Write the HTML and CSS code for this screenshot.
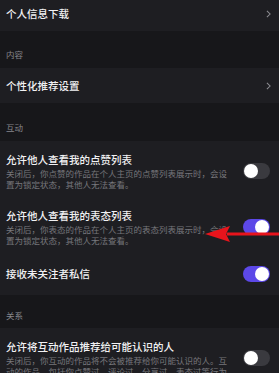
FILE: index.html
```html
<!DOCTYPE html>
<html lang="zh-CN">
<head>
<meta charset="utf-8">
<link rel="stylesheet" href="styles.css">
</head>
<body>
<div class="page">
  <div class="row row-nav row-first">
    <span class="title">个人信息下载</span>
    <svg class="chev" viewBox="0 0 6 10" width="5" height="8"><path d="M1 1 L5 5 L1 9" fill="none" stroke="#8d8d92" stroke-width="1.3"/></svg>
  </div>
  <div class="header h1">内容</div>
  <div class="row row-nav">
    <span class="title">个性化推荐设置</span>
    <svg class="chev" viewBox="0 0 6 10" width="5" height="8"><path d="M1 1 L5 5 L1 9" fill="none" stroke="#8d8d92" stroke-width="1.3"/></svg>
  </div>
  <div class="header h2">互动</div>
  <div class="row row-toggle">
    <div class="text">
      <div class="title">允许他人查看我的点赞列表</div>
      <div class="desc">关闭后，你点赞的作品在个人主页的点赞列表展示时，会设置为锁定状态，其他人无法查看。</div>
    </div>
    <div class="switch"><span class="knob"></span></div>
  </div>
  <div class="row row-toggle">
    <div class="text">
      <div class="title">允许他人查看我的表态列表</div>
      <div class="desc">关闭后，你表态的作品在个人主页的表态列表展示时，会设置为锁定状态，其他人无法查看。</div>
    </div>
    <div class="switch on"><span class="knob"></span></div>
  </div>
  <div class="row row-single">
    <span class="title">接收未关注者私信</span>
    <div class="switch on"><span class="knob"></span></div>
  </div>
  <div class="header h3">关系</div>
  <div class="row row-toggle">
    <div class="text">
      <div class="title">允许将互动作品推荐给可能认识的人</div>
      <div class="desc">关闭后，你互动的作品将不会被推荐给你可能认识的人。互动的作品，包括你点赞过、评论过、分享过、表态过等行为</div>
    </div>
    <div class="switch"><span class="knob"></span></div>
  </div>
</div>
<svg class="arrow" viewBox="0 0 76 20" width="76" height="20">
  <path d="M24 8.5 L76 8.5 L76 11.5 L24 11.5 Z" fill="#e8141c"/>
  <path d="M2 10 L27 2 L23 10 L27 18 Z" fill="#e8141c"/>
</svg>
</body>
</html>
```

FILE: styles.css
```css
html, body {
  margin: 0;
  padding: 0;
}
body {
  width: 279px;
  height: 373px;
  overflow: hidden;
  background: #17171a;
  font-family: "Noto Sans CJK SC", "Noto Sans", sans-serif;
  position: relative;
}
.page {
  display: flex;
  flex-direction: column;
}
.row {
  display: flex;
  align-items: center;
  justify-content: space-between;
  background: #1e1e22;
  padding: 0 9px 0 6px;
  box-sizing: border-box;
}
.row-nav {
  height: 35px;
}
.row-first {
  height: 31px;
  padding-bottom: 3px;
}
.chev {
  margin-right: -1px;
}
.title {
  font-size: 10.5px;
  line-height: 14px;
  color: #f1f1f3;
  font-weight: 500;
}
.header {
  background: #17171a;
  color: #86868b;
  font-size: 8.5px;
  line-height: 12px;
  padding-left: 6px;
  box-sizing: border-box;
}
.h1 { height: 37px; padding-top: 17px; }
.h2 { height: 38px; padding-top: 18px; }
.h3 { height: 33px; padding-top: 14px; }
.row-toggle {
  padding-top: 12px;
  padding-bottom: 8px;
}
.row-single {
  height: 42px;
}
.text {
  width: 224px;
}
.desc {
  font-size: 8.5px;
  line-height: 10.5px;
  color: #77777c;
  margin-top: 1px;
}
.switch {
  width: 27px;
  height: 16px;
  border-radius: 8px;
  background: #3a3a3f;
  display: flex;
  align-items: center;
  padding: 0 1px;
  box-sizing: border-box;
  flex-shrink: 0;
}
.switch.on {
  background: #5c48e8;
  justify-content: flex-end;
}
.knob {
  width: 14px;
  height: 14px;
  border-radius: 50%;
  background: #ffffff;
}
.arrow {
  position: absolute;
  left: 203px;
  top: 224px;
}
```
